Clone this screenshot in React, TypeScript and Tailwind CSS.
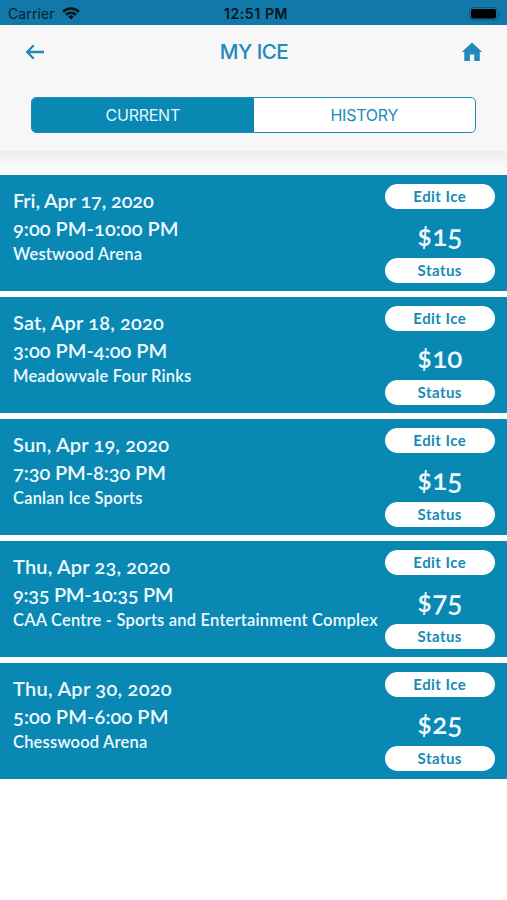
const games = [
  { date: "Fri, Apr 17, 2020", dateTracking: "tracking-[-0.14px]", time: "9:00 PM-10:00 PM", timeTracking: "tracking-[0.03px]", place: "Westwood Arena", price: "$15" },
  { date: "Sat, Apr 18, 2020", dateTracking: "tracking-[0.16px]", time: "3:00 PM-4:00 PM", timeTracking: "tracking-[0px]", place: "Meadowvale Four Rinks", price: "$10" },
  { date: "Sun, Apr 19, 2020", dateTracking: "tracking-[0.16px]", time: "7:30 PM-8:30 PM", timeTracking: "tracking-[-0.1px]", place: "Canlan Ice Sports", price: "$15" },
  { date: "Thu, Apr 23, 2020", dateTracking: "tracking-[0.16px]", time: "9:35 PM-10:35 PM", timeTracking: "tracking-[-0.3px]", place: "CAA Centre - Sports and Entertainment Complex", price: "$75" },
  { date: "Thu, Apr 30, 2020", dateTracking: "tracking-[0.26px]", time: "5:00 PM-6:00 PM", timeTracking: "tracking-[0.08px]", place: "Chesswood Arena", price: "$25" },
];

function StatusBar() {
  return (
    <div className="grid h-[25px] grid-cols-3 items-center bg-[#1278a9] pt-[2px] pr-[6px] pl-2 text-[#06202e]">
      <div className="flex items-center gap-[7px] text-[14px] tracking-[0.1px]">
        <span>Carrier</span>
        <svg width="18" height="13" viewBox="0 0 18 13" fill="none" stroke="#04141d" strokeWidth="2.5">
          <path d="M1.2 4.8a11 11 0 0 1 15.6 0" />
          <path d="M4 7.8a7 7 0 0 1 10 0" />
          <path d="M9 12.5 6.2 9.7a4 4 0 0 1 5.6 0Z" fill="#04141d" stroke="none" />
        </svg>
      </div>
      <div className="pl-[3px] text-center text-[14px] font-semibold tracking-[0.6px] whitespace-nowrap text-[#04141d]">12:51 PM</div>
      <svg className="justify-self-end" width="32" height="14" viewBox="0 0 32 14">
        <rect x=".5" y=".5" width="28" height="12.5" rx="3.5" fill="none" stroke="#0d587c" />
        <rect x="2" y="2" width="25" height="9.5" rx="2" fill="#000" />
        <path d="M30 4.5q2 2.2 0 4.5Z" fill="#0d587c" />
      </svg>
    </div>
  );
}

function Pill({ children }: { children: string }) {
  return (
    <button className="flex h-[25px] w-full items-center justify-center rounded-full bg-white text-[15px] leading-none font-bold tracking-[0.45px] text-[#168bb5]">
      {children}
    </button>
  );
}

export default function App() {
  return (
    <div className="h-[900px] w-[507px] overflow-hidden bg-white font-['Inter',sans-serif]">
      <StatusBar />
      <header className="h-[126px] bg-[#f7f7f7] text-[#2089bd]">
        <div className="grid h-[54px] grid-cols-3 items-center pr-[24px] pl-[25px]">
          <svg className="-mt-[1px]" width="20" height="16" viewBox="0 0 20 16" fill="none" stroke="currentColor" strokeWidth="2.3">
            <path d="M19 8H2M8.8 1.3 2.2 8l6.6 6.7" />
          </svg>
          <h1 className="pt-px text-center text-[20.5px] font-medium tracking-[-0.5px] whitespace-nowrap">MY ICE</h1>
          <svg className="justify-self-end" width="22" height="20" viewBox="0 0 22 20" fill="currentColor">
            <path d="M11 .5 21.2 10h-2.4v9h-5.5v-6.5H8.9V19H3.3v-9H.8Z" />
          </svg>
        </div>
        <div className="mx-[31px] mt-[18px] grid h-[36px] grid-cols-2 overflow-hidden rounded-[5px] border border-[#2089b5] bg-white text-[16px] tracking-[-0.25px]">
          <button className="bg-[#0988b4] text-[#e2f6ff]">CURRENT</button>
          <button>HISTORY</button>
        </div>
      </header>
      <div className="h-[23.5px] bg-gradient-to-b from-[#ededed] to-white" />
      <main className="flex flex-col gap-[5.9px] font-['Lato',sans-serif] text-[#eefaff]">
        {games.map((game) => (
          <section key={game.date} className="flex h-[116.2px] justify-between bg-[#0988b4] pr-3 pl-[13px]">
            <div className="pt-[11px] font-semibold whitespace-nowrap oldstyle-nums">
              <div className="text-[20px] leading-[28px]">
                <span className={game.dateTracking}>{game.date}</span>
              </div>
              <div className="text-[20px] leading-[28px]">
                <span className={game.timeTracking}>{game.time}</span>
              </div>
              <div className="text-[16.5px] leading-[25px] tracking-[0.2px]">{game.place}</div>
            </div>
            <div className="w-[110.5px] pt-[9.5px]">
              <Pill>Edit Ice</Pill>
              <div className="h-[49px] text-center text-[28px] leading-[53px] font-semibold oldstyle-nums">{game.price}</div>
              <Pill>Status</Pill>
            </div>
          </section>
        ))}
      </main>
    </div>
  );
}
